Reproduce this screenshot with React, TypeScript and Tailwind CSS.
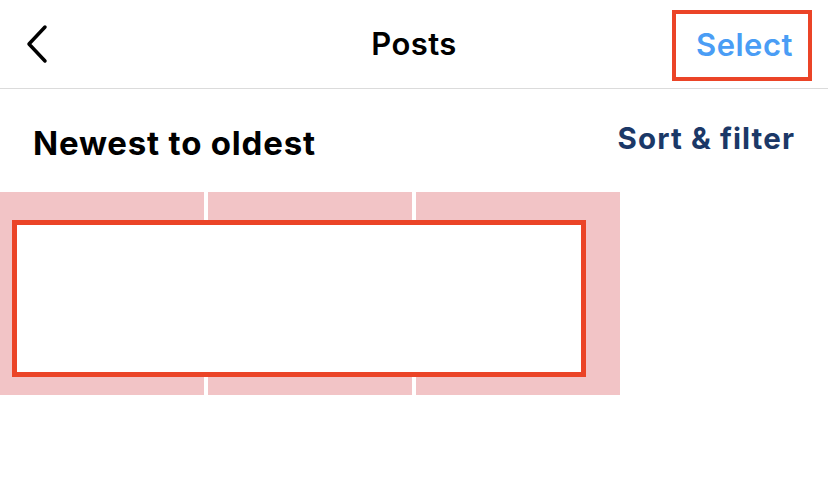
import React from 'react';

const tiles = [0, 1, 2];

export default function App() {
  return (
    <div className="w-[828px] h-[486px] bg-white overflow-hidden font-['Inter',sans-serif] text-black">
      {/* Header */}
      <div className="relative h-[89px] flex items-center justify-between border-b border-[#dbdbdb] pl-[24px] pr-[16px]">
        <button className="w-[30px] h-[44px] flex items-center">
          <svg width="26" height="40" viewBox="0 0 26 40" fill="none" stroke="#000" strokeWidth="3.5" strokeLinecap="round" strokeLinejoin="round">
            <path d="M21 3 L5 20 L21 37" />
          </svg>
        </button>
        <h1 className="absolute left-1/2 -translate-x-1/2 text-[31px] leading-[38px] font-semibold tracking-[0.4px]">Posts</h1>
        <button className="h-[71px] w-[140px] pl-[20px] pr-[14px] mt-[3px] flex items-center border-[4px] border-[#eb4427] text-[31px] font-semibold text-[#4a9df5] tracking-[0.5px]">
          Select
        </button>
      </div>

      {/* Sort row */}
      <div className="flex items-start justify-between pl-[33px] pr-[33px] h-[103px]">
        <span className="mt-[34px] text-[33px] leading-[40px] font-bold tracking-[0.8px]">Newest to oldest</span>
        <button className="mt-[31px] text-[29.5px] leading-[36px] font-bold text-[#1b3867] tracking-[1.1px]">Sort &amp; filter</button>
      </div>

      {/* Grid */}
      <div className="relative w-[620px]">
        <div className="grid grid-cols-3 gap-[4px]">
          {tiles.map(t => (
            <div key={t} className="h-[203px] bg-[#f2c4c6]" />
          ))}
        </div>
        <div className="absolute left-[12px] top-[28px] w-[574px] h-[157px] bg-white border-[5px] border-[#eb4427]" />
      </div>
    </div>
  );
}
